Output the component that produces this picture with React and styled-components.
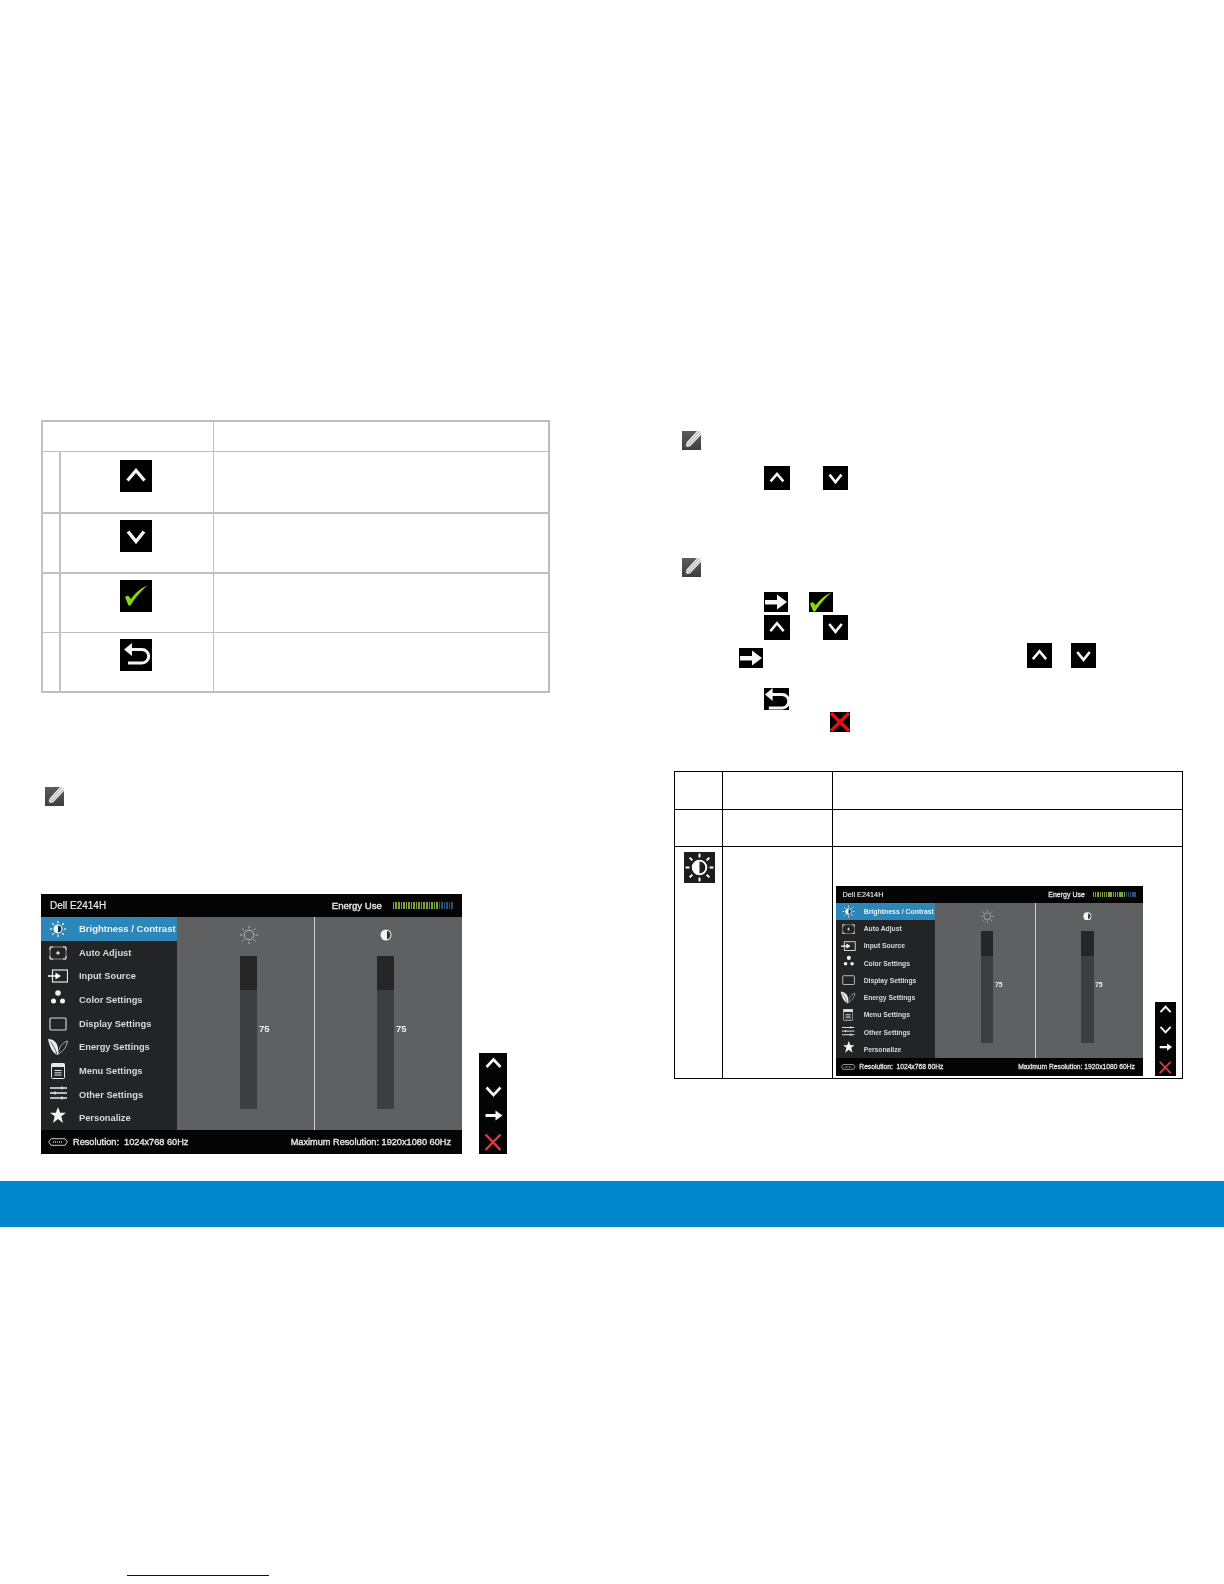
import React from "react";
import styled, { createGlobalStyle } from "styled-components";

const GlobalStyle = createGlobalStyle`
  html, body {
    margin: 0;
    padding: 0;
    background: #fff;
  }
  body {
    font-family: "Liberation Sans", Arial, sans-serif;
  }
`;

const Page = styled.div`
  width: 1224px;
  height: 1584px;
  display: flex;
  flex-direction: column;
`;

const Columns = styled.div`
  display: grid;
  grid-template-columns: 509px 509px;
  column-gap: 124px;
  padding: 420px 0 0 41px;
  height: 1181px;
  box-sizing: border-box;
`;

const Column = styled.div`
  display: flex;
  flex-direction: column;
  padding-top: ${p => p.$top || 0}px;
`;

const Band = styled.div`
  height: 46px;
  background: #0086cc;
  flex-shrink: 0;
`;

const BottomLink = styled.a`
  display: block;
  width: 142px;
  height: 1px;
  margin: 348px 0 0 127px;
  background: #0000a8;
`;

// tables
const GrayTable = styled.table`
  width: 509px;
  table-layout: fixed;
  border-collapse: collapse;
  border: 2px solid #bdbdbd;
`;

const GrayCell = styled.td`
  padding: 0;
  vertical-align: top;
  border-left: ${p => (p.$thin ? 1 : 2)}px solid #c2c2c2;
  border-top: ${p => (p.$thick ? 2 : 1)}px solid #bfbfbf;
  border-bottom: 1px solid #bfbfbf;
`;

const IconHolder = styled.div`
  display: flex;
  padding: ${p => p.$top}px 0 0 ${p => p.$left}px;
`;

const BlackTable = styled.table`
  width: 509px;
  height: 308px;
  margin-top: 39px;
  table-layout: fixed;
  border-collapse: collapse;
  border: 1px solid #000;
`;

const BlackCell = styled.td`
  border: 1px solid #000;
  padding: 0;
  vertical-align: top;
`;

const SettingIcon = styled.div`
  width: 31px;
  height: 31px;
  margin: 5px 0 0 9px;
  background: #1d1d1d;
`;

const OsdHolder = styled.div`
  padding: 39px 0 0 3px;
`;

// keys and notes
const Key = styled.span`
  display: block;
  flex-shrink: 0;
  width: ${p => p.$w}px;
  height: ${p => p.$h}px;
  margin-left: ${p => p.$ml || 0}px;
  margin-top: ${p => p.$drop || 0}px;
  background: #000;
  & svg {
    display: block;
    width: 100%;
    height: 100%;
  }
`;

const KeyLine = styled.div`
  display: flex;
  align-items: flex-start;
  margin-top: ${p => p.$mt}px;
`;

const NoteMark = styled.div`
  width: 19px;
  height: 19px;
  margin-top: ${p => p.$mt}px;
  margin-left: ${p => p.$ml}px;
  & svg {
    display: block;
  }
`;

// the on screen menu
const OsdRow = styled.div`
  display: flex;
  align-items: flex-end;
  gap: 17px;
  margin-top: ${p => p.$mt || 0}px;
  zoom: ${p => p.$zoom || 1};
`;

const Osd = styled.div`
  width: 421px;
  height: 260px;
  flex-shrink: 0;
  display: flex;
  flex-direction: column;
  color: #e6e6e6;
  font-size: 9.5px;
  filter: blur(0.35px);
`;

const OsdHeader = styled.div`
  height: 23px;
  padding: 0 9px;
  background: #050505;
  display: flex;
  align-items: center;
  justify-content: space-between;
`;

const ModelName = styled.span`
  font-size: 10px;
  color: #f0f0f0;
  -webkit-text-stroke: 0.15px #f0f0f0;
`;

const EnergyBox = styled.div`
  display: flex;
  align-items: center;
  gap: 11px;
  font-size: 9.6px;
  -webkit-text-stroke: 0.35px #e6e6e6;
`;

const Meter = styled.div`
  display: flex;
  gap: 1px;
  height: 7px;
`;

const Tick = styled.i`
  display: block;
  width: 1.55px;
  background: ${p => (p.$on ? "#7fa33f" : "#2a5470")};
`;

const OsdBody = styled.div`
  flex: 1;
  display: flex;
  min-height: 0;
`;

const SideMenu = styled.div`
  width: 136px;
  background: #232425;
  display: flex;
  flex-direction: column;
`;

const MenuRow = styled.div`
  flex: 1;
  display: flex;
  align-items: center;
  white-space: nowrap;
  font-weight: bold;
  color: ${p => (p.$active ? "#e8f2f8" : "#d9d9d9")};
  background: ${p => (p.$active ? "#2d86b8" : "transparent")};
  font-size: ${p => (p.$active ? 9.5 : 9.3)}px;
`;

const MenuIcon = styled.span`
  width: 34px;
  margin-right: 4px;
  padding-bottom: ${p => (p.$lift || 0) * 2}px;
  display: flex;
  justify-content: center;
  & svg {
    display: block;
  }
`;

const Panel = styled.div`
  flex: 1;
  display: flex;
  background: #5e6062;
`;

const SliderColumn = styled.div`
  width: ${p => p.$w}px;
  box-sizing: border-box;
  display: flex;
  flex-direction: column;
  padding: 8px 0 0 ${p => p.$left}px;
  border-left: ${p => (p.$divider ? "1px solid #d0d0d0" : "none")};
`;

const SliderIcon = styled.div`
  width: 17px;
  height: 20px;
  display: flex;
  justify-content: center;
  align-items: center;
  & svg {
    display: block;
    flex-shrink: 0;
  }
`;

const SliderLine = styled.div`
  display: flex;
  align-items: center;
  gap: 2px;
  margin-top: 11px;
`;

const Slider = styled.div`
  width: 17px;
  height: 153px;
  background: #3c3e41;
`;

const SliderFill = styled.div`
  height: 34px;
  background: #262626;
`;

const SliderValue = styled.span`
  font-size: 9.5px;
  font-weight: bold;
  color: #ececec;
  margin-bottom: 8px;
`;

const OsdFooter = styled.div`
  height: 24px;
  padding: 0 11px 0 7px;
  background: #050505;
  display: flex;
  align-items: center;
  justify-content: space-between;
  font-size: 9.2px;
  -webkit-text-stroke: 0.35px #e6e6e6;
  white-space: pre;
`;

const FooterLeft = styled.div`
  display: flex;
  align-items: center;
  gap: 5px;
`;

const NavStrip = styled.div`
  width: 28px;
  height: 101px;
  flex-shrink: 0;
  box-sizing: border-box;
  background: #050505;
  display: flex;
  flex-direction: column;
  filter: blur(0.3px);
  & svg {
    display: block;
  }
`;

// drawings
const UpIcon = () => (
  <svg viewBox="0 0 32 32">
    <path d="M7.5 20.5L16 10.5l8.5 10" fill="none" stroke="#f4f4f4" strokeWidth="3.4" />
  </svg>
);

const DownIcon = () => (
  <svg viewBox="0 0 32 32">
    <path d="M8 11.5l8 10 8-10" fill="none" stroke="#f4f4f4" strokeWidth="3.4" />
  </svg>
);

const CheckIcon = ({ box = "0 0 32 32" }) => (
  <svg viewBox={box} preserveAspectRatio="none">
    <path d="M5 17l3-1.500 3 3.500C15 13 21 8 27.500 5.500 22 10 15 18 10.500 25.500h-2z" fill="#84d80f" />
  </svg>
);

const BackIcon = ({ box = "0 0 32 32" }) => (
  <svg viewBox={box} preserveAspectRatio="none">
    <path d="M4 10.500L12 4v13z" fill="#f4f4f4" />
    <path d="M11 10.500h11a6.700 6.700 0 0 1 0 13.400H8" fill="none" stroke="#f4f4f4" strokeWidth="3" />
  </svg>
);

const ArrowIcon = () => (
  <svg viewBox="0 0 24 20">
    <path d="M1 8h12V2.500L23 10l-10 7.500V12.500H1z" fill="#f6f6f6" />
  </svg>
);

const CrossIcon = () => (
  <svg viewBox="0 0 20 20">
    <path d="M1 1l18 18M19 1L1 19" stroke="#e20f18" strokeWidth="3.400" />
  </svg>
);

const Pencil = () => (
  <svg width="19" height="19" viewBox="0 0 19 19">
    <defs>
      <linearGradient id="noteBg" x1="0" y1="0" x2="0" y2="1">
        <stop offset="0" stopColor="#5c5c5c" />
        <stop offset="1" stopColor="#3e3e3e" />
      </linearGradient>
    </defs>
    <rect width="19" height="19" fill="url(#noteBg)" />
    <path d="M4.500 11.500L15 0h4v4L8 15.500z" fill="#ececec" />
    <path d="M6 12.500L17 .500M7.300 14L18.500 2.500" stroke="#8a8a8a" strokeWidth="0.700" />
    <path d="M4.500 11.500L3 16.500l5-1z" fill="#dcdcdc" />
    <path d="M3 16.500l.7-2.200 1.500 1.700z" fill="#222" />
  </svg>
);

const Rays = ({ color, width, r1 = 6.5, r2 = 9 }) => (
  <g stroke={color} strokeWidth={width}>
    {[0, 45, 90, 135, 180, 225, 270, 315].map(a => {
      const c = Math.cos((a * Math.PI) / 180);
      const s = Math.sin((a * Math.PI) / 180);
      return <line key={a} x1={10 + c * r1} y1={10 + s * r1} x2={10 + c * r2} y2={10 + s * r2} />;
    })}
  </g>
);

const HalfSun = ({ size = 18, ringBg = "#10364d" }) => (
  <svg width={size} height={size} viewBox="0 0 20 20">
    <Rays color="#fff" width="1.300" />
    <circle cx="10" cy="10" r="4.400" fill={ringBg} stroke="#fff" strokeWidth="1.200" />
    <path d="M10 5.600a4.400 4.400 0 0 0 0 8.800z" fill="#fff" />
  </svg>
);

const ThinSun = () => (
  <svg width="20" height="20" viewBox="0 0 20 20">
    <Rays color="#cfcfcf" width="0.800" r1={6.500} r2={9} />
    <circle cx="10" cy="10" r="4.800" fill="none" stroke="#cfcfcf" strokeWidth="0.800" />
  </svg>
);

const ContrastDot = () => (
  <svg width="12" height="12" viewBox="0 0 12 12">
    <circle cx="6" cy="6" r="5.500" fill="#f4f4f4" />
    <path d="M7 1.700a4.400 4.400 0 0 1 0 8.600z" fill="#333" />
  </svg>
);

const AdjustIcon = () => (
  <svg width="18" height="14" viewBox="0 0 18 14">
    <rect x="1" y="1" width="16" height="12" rx="1" fill="none" stroke="#8c8c8c" strokeWidth="1" />
    <path d="M1 4V1h3M14 1h3v3M17 10v3h-3M4 13H1v-3" fill="none" stroke="#f0f0f0" strokeWidth="1" />
    <path d="M9 5v4M7 7h4" stroke="#fff" strokeWidth="1" />
  </svg>
);

const InputIcon = () => (
  <svg width="20" height="14" viewBox="0 0 20 14">
    <rect x="4.500" y="1" width="15" height="12" fill="none" stroke="#e6e6e6" strokeWidth="1.200" />
    <path d="M0 6.200h7.500V3.500L13 7l-5.500 3.500V7.800H0z" fill="#fff" />
  </svg>
);

const DotsIcon = () => (
  <svg width="16" height="16" viewBox="0 0 16 16">
    <circle cx="8" cy="4" r="2.800" fill="#f2f2f2" />
    <circle cx="3.500" cy="12" r="2.500" fill="#f2f2f2" />
    <circle cx="12.500" cy="12" r="2.500" fill="#f2f2f2" />
  </svg>
);

const DisplayIcon = () => (
  <svg width="18" height="14" viewBox="0 0 18 14">
    <rect x="1" y="1" width="16" height="12" rx="1" fill="none" stroke="#dcdcdc" strokeWidth="1.100" />
  </svg>
);

const LeafIcon = () => (
  <svg width="22" height="18" viewBox="0 0 22 18">
    <path d="M1 1c5 0 9 3 10 9l0 7C7 16 3 11 1 1z" fill="#eee" />
    <path d="M3.500 3.500C6 7 8 11 10 16" stroke="#333" strokeWidth="0.800" fill="none" />
    <path d="M11.500 16c0-6 3-11 9-13-1 6-4 10-9 13z" fill="none" stroke="#ccc" strokeWidth="0.800" />
  </svg>
);

const MenuListIcon = () => (
  <svg width="14" height="16" viewBox="0 0 14 16">
    <rect x="0.500" y="0.500" width="13" height="15" rx="1" fill="none" stroke="#e8e8e8" />
    <rect x="0.500" y="0.500" width="13" height="3.500" fill="#e8e8e8" />
    <path d="M3.500 7.500h7M3.500 9.800h7M3.500 12h7" stroke="#e8e8e8" strokeWidth="1" />
  </svg>
);

const SlidersIcon = () => (
  <svg width="17" height="14" viewBox="0 0 17 14">
    <path d="M0 2h17M0 7h17M0 12h17" stroke="#eaeaea" strokeWidth="1.300" />
    <path d="M12 0.500v3M5 5.500v3M12 10.500v3" stroke="#eaeaea" strokeWidth="1.300" />
  </svg>
);

const StarIcon = () => (
  <svg width="16" height="16" viewBox="0 0 16 16">
    <path d="M8 0l2.200 5.700H16l-4.700 3.600L13 16 8 12 3 16l1.700-6.700L0 5.700h5.800z" fill="#f5f5f5" />
  </svg>
);

const PortIcon = () => (
  <svg width="20" height="8" viewBox="0 0 20 8">
    <path d="M3 .700h14l2.300 3.300L17 7.300H3L.700 4z" fill="none" stroke="#ddd" strokeWidth="0.900" />
    <path d="M5 4h10" stroke="#999" strokeWidth="2" strokeDasharray="1 1" />
  </svg>
);

const NavUp = () => (
  <svg width="28" height="25" viewBox="0 0 28 25">
    <path d="M7.500 14l7-7.500 7 7.500" fill="none" stroke="#f4f4f4" strokeWidth="2.600" />
  </svg>
);

const NavDown = () => (
  <svg width="28" height="25" viewBox="0 0 28 25">
    <path d="M7.500 9.500l7 7.500 7-7.500" fill="none" stroke="#f4f4f4" strokeWidth="2.600" />
  </svg>
);

const NavArrow = () => (
  <svg width="28" height="25" viewBox="0 0 28 25">
    <path d="M6.500 11h10V7.500l7 5-7 5V14h-10z" fill="#f6f6f6" />
  </svg>
);

const NavCross = () => (
  <svg width="28" height="26" viewBox="0 0 28 26">
    <path d="M6.500 6.500l15 15.500M21.500 6.500l-15 15.500" stroke="#e33b42" strokeWidth="2.400" />
  </svg>
);

const menuItems = [
  { label: "Brightness / Contrast", icon: <HalfSun />, active: true },
  { label: "Auto Adjust", icon: <AdjustIcon /> },
  { label: "Input Source", icon: <InputIcon /> },
  { label: "Color Settings", icon: <DotsIcon />, lift: 2.5 },
  { label: "Display Settings", icon: <DisplayIcon /> },
  { label: "Energy Settings", icon: <LeafIcon /> },
  { label: "Menu Settings", icon: <MenuListIcon /> },
  { label: "Other Settings", icon: <SlidersIcon />, lift: 2 },
  { label: "Personalize", icon: <StarIcon />, lift: 3 },
];

const ticks = Array.from({ length: 24 }, (_, i) => i < 18);

const OsdScreen = ({ zoom, mt }) => (
  <OsdRow $zoom={zoom} $mt={mt}>
    <Osd>
      <OsdHeader>
        <ModelName>Dell E2414H</ModelName>
        <EnergyBox>
          <span>Energy Use</span>
          <Meter>
            {ticks.map((on, i) => (
              <Tick key={i} $on={on} />
            ))}
          </Meter>
        </EnergyBox>
      </OsdHeader>
      <OsdBody>
        <SideMenu>
          {menuItems.map(item => (
            <MenuRow key={item.label} $active={item.active}>
              <MenuIcon $lift={item.lift}>{item.icon}</MenuIcon>
              {item.label}
            </MenuRow>
          ))}
        </SideMenu>
        <Panel>
          <SliderColumn $w={137} $left={63}>
            <SliderIcon>
              <ThinSun />
            </SliderIcon>
            <SliderLine>
              <Slider>
                <SliderFill />
              </Slider>
              <SliderValue>75</SliderValue>
            </SliderLine>
          </SliderColumn>
          <SliderColumn $w={148} $left={62} $divider>
            <SliderIcon>
              <ContrastDot />
            </SliderIcon>
            <SliderLine>
              <Slider>
                <SliderFill />
              </Slider>
              <SliderValue>75</SliderValue>
            </SliderLine>
          </SliderColumn>
        </Panel>
      </OsdBody>
      <OsdFooter>
        <FooterLeft>
          <PortIcon />
          <span>Resolution:  1024x768 60Hz</span>
        </FooterLeft>
        <span>Maximum Resolution: 1920x1080 60Hz</span>
      </OsdFooter>
    </Osd>
    <NavStrip>
      <NavUp />
      <NavDown />
      <NavArrow />
      <NavCross />
    </NavStrip>
  </OsdRow>
);

const buttonRows = [
  { icon: <UpIcon />, left: 59, top: 8, height: 62 },
  { icon: <DownIcon />, left: 59, top: 6, height: 60, thick: true },
  { icon: <CheckIcon />, left: 59, top: 6, height: 59, thick: true },
  { icon: <BackIcon />, left: 59, top: 6, height: 60 },
];

const App = () => {
  return (
    <Page>
      <GlobalStyle />
      <Columns>
        <Column>
          <GrayTable>
            <colgroup>
              <col style={{ width: 18 }} />
              <col style={{ width: 153 }} />
              <col />
            </colgroup>
            <tbody>
              <tr style={{ height: 30 }}>
                <GrayCell colSpan={2} />
                <GrayCell $thin />
              </tr>
              {buttonRows.map((row, i) => (
                <tr key={i} style={{ height: row.height }}>
                  <GrayCell $thick={row.thick} />
                  <GrayCell $thick={row.thick}>
                    <IconHolder $left={row.left} $top={row.top}>
                      <Key $w={32} $h={32}>
                        {row.icon}
                      </Key>
                    </IconHolder>
                  </GrayCell>
                  <GrayCell $thin $thick={row.thick} />
                </tr>
              ))}
            </tbody>
          </GrayTable>
          <NoteMark $mt={94} $ml={4}>
            <Pencil />
          </NoteMark>
          <OsdScreen mt={88} />
        </Column>
        <Column $top={11}>
          <NoteMark $mt={0} $ml={8}>
            <Pencil />
          </NoteMark>
          <KeyLine $mt={16}>
            <Key $w={26} $h={24} $ml={90}>
              <UpIcon />
            </Key>
            <Key $w={25} $h={24} $ml={33}>
              <DownIcon />
            </Key>
          </KeyLine>
          <NoteMark $mt={68} $ml={8}>
            <Pencil />
          </NoteMark>
          <KeyLine $mt={15}>
            <Key $w={24} $h={20} $ml={90}>
              <ArrowIcon />
            </Key>
            <Key $w={24} $h={20} $ml={21}>
              <CheckIcon box="4 5 25 21" />
            </Key>
          </KeyLine>
          <KeyLine $mt={3}>
            <Key $w={26} $h={25} $ml={90}>
              <UpIcon />
            </Key>
            <Key $w={25} $h={25} $ml={33}>
              <DownIcon />
            </Key>
          </KeyLine>
          <KeyLine $mt={3}>
            <Key $w={24} $h={20} $ml={65} $drop={5}>
              <ArrowIcon />
            </Key>
            <Key $w={25} $h={25} $ml={264}>
              <UpIcon />
            </Key>
            <Key $w={25} $h={25} $ml={19}>
              <DownIcon />
            </Key>
          </KeyLine>
          <KeyLine $mt={20}>
            <Key $w={25} $h={22} $ml={90}>
              <BackIcon box="3 4 26 22" />
            </Key>
          </KeyLine>
          <KeyLine $mt={2}>
            <Key $w={20} $h={20} $ml={156}>
              <CrossIcon />
            </Key>
          </KeyLine>
          <BlackTable>
            <colgroup>
              <col style={{ width: 48 }} />
              <col style={{ width: 110 }} />
              <col />
            </colgroup>
            <tbody>
              <tr style={{ height: 38 }}>
                <BlackCell />
                <BlackCell />
                <BlackCell />
              </tr>
              <tr style={{ height: 37 }}>
                <BlackCell />
                <BlackCell />
                <BlackCell />
              </tr>
              <tr>
                <BlackCell>
                  <SettingIcon>
                    <HalfSun size={31} ringBg="#1d1d1d" />
                  </SettingIcon>
                </BlackCell>
                <BlackCell />
                <BlackCell>
                  <OsdHolder>
                    <OsdScreen zoom={0.729} />
                  </OsdHolder>
                </BlackCell>
              </tr>
            </tbody>
          </BlackTable>
        </Column>
      </Columns>
      <Band />
      <BottomLink />
    </Page>
  );
};

export default App;
